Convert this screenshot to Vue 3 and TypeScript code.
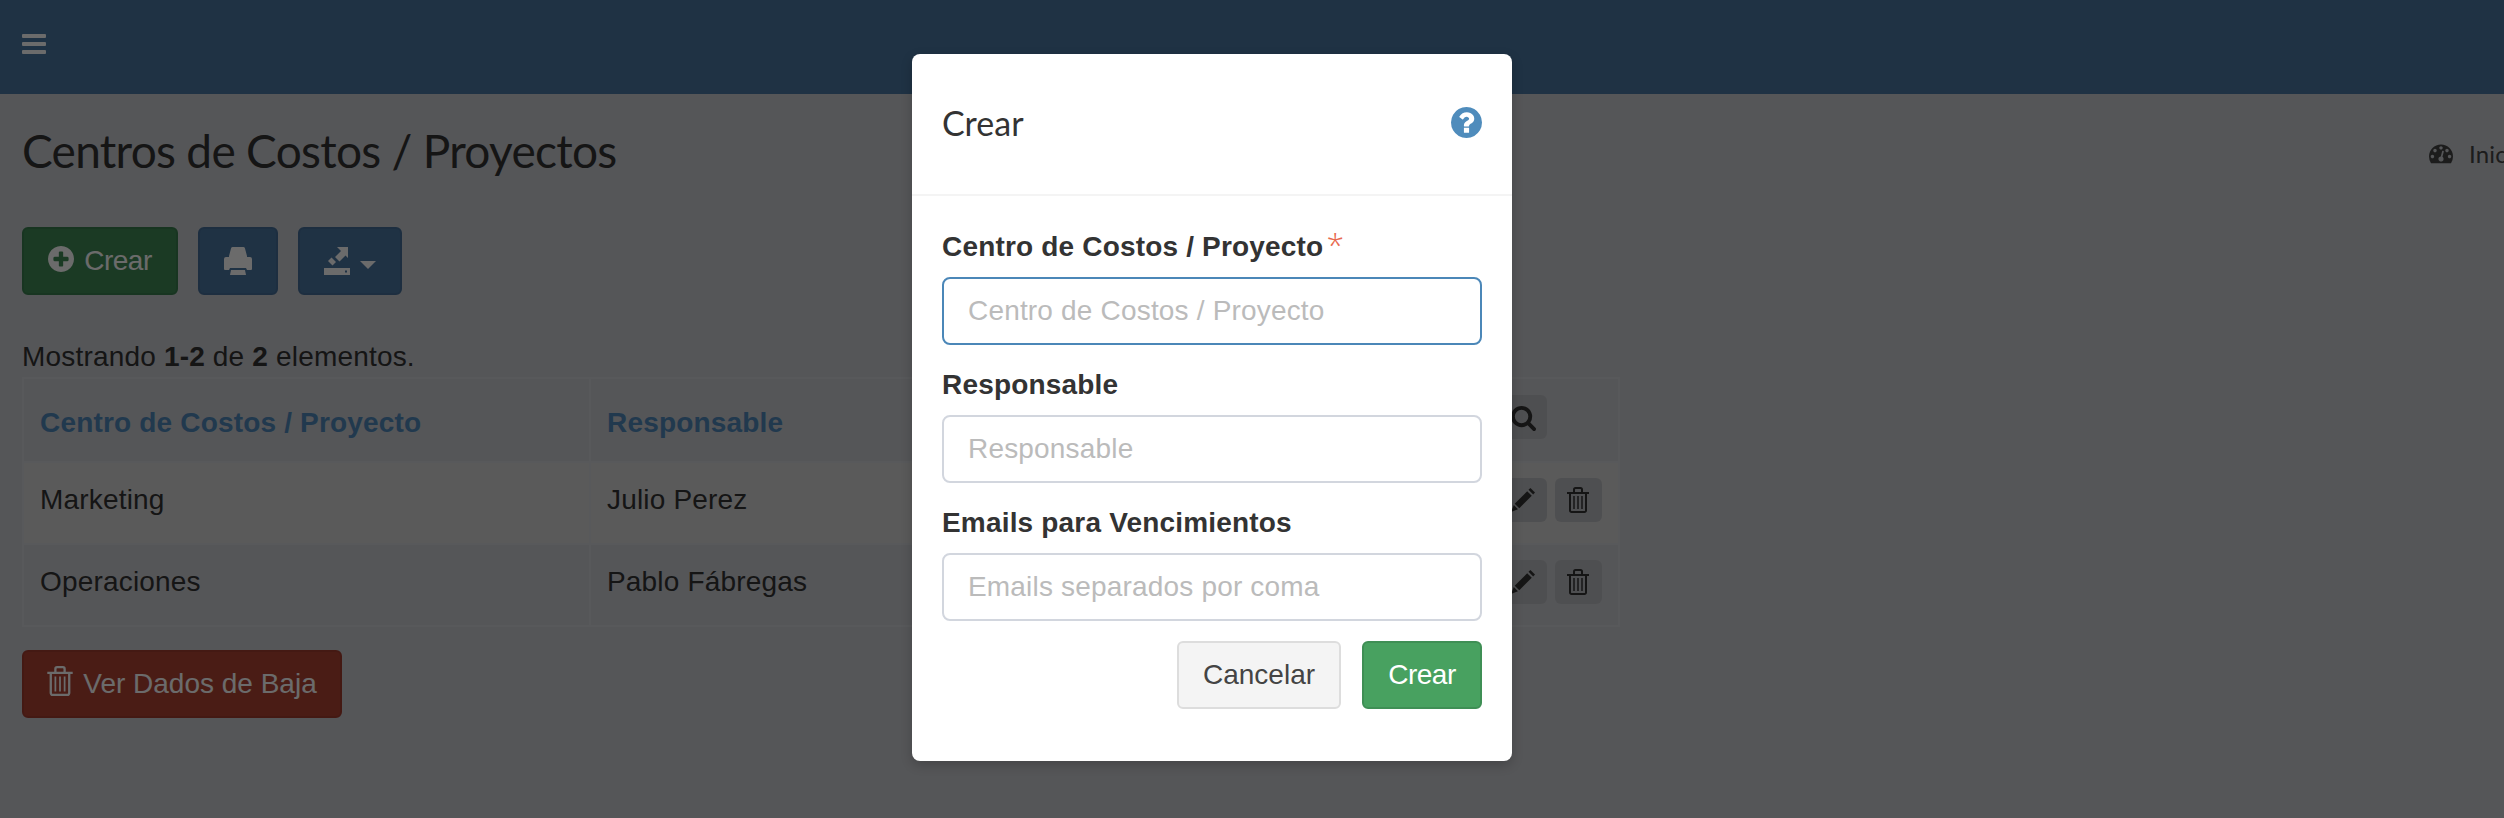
<script setup lang="ts">
interface Row {
  name: string
  owner: string
}

interface Field {
  label: string
  placeholder: string
  required?: boolean
  focused?: boolean
}

const rows: Row[] = [
  { name: 'Marketing', owner: 'Julio Perez' },
  { name: 'Operaciones', owner: 'Pablo Fábregas' },
]

const fields: Field[] = [
  { label: 'Centro de Costos / Proyecto', placeholder: 'Centro de Costos / Proyecto', required: true, focused: true },
  { label: 'Responsable', placeholder: 'Responsable' },
  { label: 'Emails para Vencimientos', placeholder: 'Emails separados por coma' },
]
</script>

<template>
  <div class="page">
    <header class="topbar">
      <svg class="bars" viewBox="0 0 24 20" fill="currentColor">
        <rect width="24" height="4" rx="1" />
        <rect y="8" width="24" height="4" rx="1" />
        <rect y="16" width="24" height="4" rx="1" />
      </svg>
    </header>

    <main class="content">
      <div class="title-row">
        <h1>Centros de Costos / Proyectos</h1>
        <div class="crumb">
          <svg class="gauge" viewBox="0 0 1792 1792" fill="currentColor">
            <path d="M384 1152q0-53-37.5-90.5t-90.5-37.5-90.5 37.5-37.5 90.5 37.5 90.5 90.5 37.5 90.5-37.5 37.5-90.5zm192-448q0-53-37.5-90.5t-90.5-37.5-90.5 37.5-37.5 90.5 37.5 90.5 90.5 37.5 90.5-37.5 37.5-90.5zm428 481l101-382q6-26-7.5-48.5t-38.5-29.5-48 6.5-30 39.5l-101 382q-60 5-107 43.5t-63 98.5q-20 77 20 146t117 89 146-20 89-117q16-60-6-117t-72-91zm660-33q0-53-37.5-90.5t-90.5-37.5-90.5 37.5-37.5 90.5 37.5 90.5 90.5 37.5 90.5-37.5 37.5-90.5zm-640-640q0-53-37.5-90.5t-90.5-37.5-90.5 37.5-37.5 90.5 37.5 90.5 90.5 37.5 90.5-37.5 37.5-90.5zm448 192q0-53-37.5-90.5t-90.5-37.5-90.5 37.5-37.5 90.5 37.5 90.5 90.5 37.5 90.5-37.5 37.5-90.5zm320 448q0 261-141 483-19 29-54 29h-1402q-35 0-54-29-141-221-141-483 0-182 71-348t191-286 286-191 348-71 348 71 286 191 191 286 71 348z" />
          </svg>
          <span>Inicio</span>
        </div>
      </div>

      <div class="toolbar">
        <button class="btn btn-green btn-create">
          <svg class="ico-plus" viewBox="128 128 1536 1536" fill="currentColor">
            <path d="M1344 960v-128q0-26-19-45t-45-19h-256v-256q0-26-19-45t-45-19h-128q-26 0-45 19t-19 45v256h-256q-26 0-45 19t-19 45v128q0 26 19 45t45 19h256v256q0 26 19 45t45 19h128q26 0 45-19t19-45v-256h256q26 0 45-19t19-45zm320-64q0 209-103 385.5t-279.5 279.5-385.5 103-385.5-103-279.5-279.5-103-385.5 103-385.5 279.5-279.5 385.5-103 385.5 103 279.5 279.5 103 385.5z" />
          </svg>
          <span class="tight">Crear</span>
        </button>
        <button class="btn btn-blue btn-print">
          <svg class="ico-print" viewBox="0 0 28 28" fill="currentColor">
            <path d="M7 1.500A1.500 1.500 0 0 1 8.500 0h11A1.500 1.500 0 0 1 21 1.500L23 9v1h3a2 2 0 0 1 2 2v10a1 1 0 0 1-1 1h-4l-1-2H6l-1 2H1a1 1 0 0 1-1-1V12a2 2 0 0 1 2-2h3V9z" />
            <path d="M7 23h14l1 5H6z" />
          </svg>
        </button>
        <button class="btn btn-blue btn-export">
          <svg class="ico-export" viewBox="0 0 26 28" fill="currentColor">
            <path d="M24 0H13l4 4-6 6 4.500 4.500 6-6 2.500 2.500z" />
            <path d="M7.500 10.500l4.500 4.500-3.500 3.500-4.500-4.500z" />
            <path fill-rule="evenodd" d="M0 21h26v7H0zM21 23.500v2h2v-2z" />
          </svg>
          <span class="caret"></span>
        </button>
      </div>

      <p class="summary">Mostrando <b>1-2</b> de <b>2</b> elementos.</p>

      <table class="grid">
        <colgroup>
          <col class="col-name" />
          <col class="col-owner" />
          <col class="col-actions" />
        </colgroup>
        <thead>
          <tr>
            <th>Centro de Costos / Proyecto</th>
            <th>Responsable</th>
            <th class="actions">
              <button class="mini">
                <svg class="ico-search" viewBox="0 0 1792 1792" fill="currentColor">
                  <path d="M1216 832q0-185-131.500-316.500t-316.500-131.500-316.500 131.500-131.500 316.500 131.500 316.500 316.500 131.500 316.500-131.500 131.500-316.500zm512 832q0 52-38 90t-90 38q-54 0-90-38l-343-342q-179 124-399 124-143 0-273.500-55.500t-225-150-150-225-55.500-273.500 55.500-273.500 150-225 225-150 273.500-55.500 273.500 55.500 225 150 150 225 55.500 273.500q0 220-124 399l343 343q37 37 37 90z" />
                </svg>
              </button>
            </th>
          </tr>
        </thead>
        <tbody>
          <tr v-for="row in rows" :key="row.name">
            <td>{{ row.name }}</td>
            <td>{{ row.owner }}</td>
            <td class="actions">
              <div class="action-btns">
                <button class="mini">
                  <svg class="ico-pencil" viewBox="0 0 26 26" fill="currentColor">
                    <path d="M21 0l5 5-2 2-5-5z" />
                    <path d="M17.500 3.500l5 5L9 22l-5-5z" />
                    <path d="M3 18.500L7.500 23 0 26z" />
                  </svg>
                </button>
                <button class="mini">
                  <svg class="ico-trash" viewBox="0 0 22 26" fill="none" stroke="currentColor" stroke-width="2">
                    <path d="M0 6h22M7 5.500V2.500a1.500 1.500 0 0 1 1.500-1.500h5A1.500 1.500 0 0 1 15 2.500v3" />
                    <path d="M3 6v17.500A1.500 1.500 0 0 0 4.500 25h13a1.500 1.500 0 0 0 1.500-1.500V6" />
                    <path stroke-width="1.500" d="M7 9v13M11 9v13M15 9v13" />
                  </svg>
                </button>
              </div>
            </td>
          </tr>
        </tbody>
      </table>

      <button class="btn btn-red">
        <svg class="ico-trash-big" viewBox="0 0 22 26" fill="none" stroke="currentColor" stroke-width="2">
          <path d="M0 6h22M7 5.500V2.500a1.500 1.500 0 0 1 1.500-1.500h5A1.500 1.500 0 0 1 15 2.500v3" />
          <path d="M3 6v17.500A1.500 1.500 0 0 0 4.500 25h13a1.500 1.500 0 0 0 1.500-1.500V6" />
          <path stroke-width="1.500" d="M7 9v13M11 9v13M15 9v13" />
        </svg>
        Ver Dados de Baja
      </button>
    </main>

    <div class="backdrop"></div>

    <section class="dialog">
      <div class="dialog-head">
        <h2>Crear</h2>
        <svg class="ico-help" viewBox="128 128 1536 1536" fill="currentColor">
          <path d="M1024 1376v-192q0-14-9-23t-23-9h-192q-14 0-23 9t-9 23v192q0 14 9 23t23 9h192q14 0 23-9t9-23zm256-672q0-88-55.500-163t-138.500-116-170-41q-243 0-371 213-15 24 8 42l132 100q7 6 19 6 16 0 25-12 53-68 86-92 34-24 86-24 48 0 85.500 26t37.500 59q0 38-20 61t-68 45q-63 28-115.500 86.500t-52.500 125.500v36q0 14 9 23t23 9h192q14 0 23-9t9-23q0-19 21.500-49.500t54.500-49.500q32-18 49-28.500t46-35 44.500-48 28-60.500 12.500-81zm384 192q0 209-103 385.500t-279.500 279.500-385.500 103-385.500-103-279.500-279.500-103-385.500 103-385.500 279.500-279.500 385.500-103 385.500 103 279.500 279.500 103 385.500z" />
        </svg>
      </div>
      <form class="dialog-body" @submit.prevent>
        <div v-for="field in fields" :key="field.label" class="field">
          <label>{{ field.label }}<span v-if="field.required" class="req">*</span></label>
          <input type="text" :class="{ focused: field.focused }" :placeholder="field.placeholder" />
        </div>
        <div class="dialog-actions">
          <button type="button" class="btn btn-cancel">Cancelar</button>
          <button type="submit" class="btn btn-save"><span class="tight">Crear</span></button>
        </div>
      </form>
    </section>
  </div>
</template>

<style scoped>
.page {
  position: relative;
  width: 2504px;
  height: 818px;
  overflow: hidden;
  background: #caccd2;
  font-family: "Liberation Sans", Arial, sans-serif;
  font-size: 28px;
  letter-spacing: 0.18px;
  color: #333;
}

.topbar {
  height: 94px;
  background: #4a77a2;
  display: flex;
  align-items: center;
  padding-left: 22px;
  color: #fff;
}

.bars {
  width: 24px;
  height: 20px;
  margin-bottom: 6px;
}

.content {
  padding: 0 0 0 22px;
}

.title-row {
  display: flex;
  align-items: center;
  height: 114px;
}

h1 {
  margin: 0;
  font-family: Lato, "Open Sans", sans-serif;
  font-weight: 400;
  font-size: 46px;
  letter-spacing: -0.7px;
  line-height: 64px;
  color: #333;
}

.crumb {
  margin-left: auto;
  margin-top: 4px;
  width: 75px;
  display: flex;
  align-items: center;
  gap: 16px;
  white-space: nowrap;
  font-family: Lato, sans-serif;
  font-size: 24px;
  color: #444;
}

.gauge {
  width: 24px;
  height: 24px;
  flex: none;
}

.toolbar {
  display: flex;
  gap: 20px;
  margin-top: 19px;
}

.btn {
  display: flex;
  align-items: center;
  justify-content: center;
  height: 68px;
  padding: 0;
  border: 2px solid transparent;
  border-radius: 6px;
  font-family: inherit;
  font-size: 28px;
  letter-spacing: 0;
  color: #fff;
  box-sizing: border-box;
}

.tight {
  letter-spacing: -0.5px;
}

.btn-green {
  background: #408a56;
  border-color: #3a7f4f;
}

.btn-blue {
  background: #4a77a2;
  border-color: #456f98;
}

.btn-create {
  width: 156px;
  gap: 10px;
}

.ico-plus {
  width: 26px;
  height: 26px;
  margin-bottom: 4px;
}

.btn-print {
  width: 80px;
}

.ico-print {
  width: 28px;
  height: 28px;
}

.btn-export {
  width: 104px;
  gap: 10px;
}

.ico-export {
  width: 26px;
  height: 28px;
}

.caret {
  width: 0;
  height: 0;
  margin-top: 8px;
  border-top: 8px solid #fff;
  border-left: 8px solid transparent;
  border-right: 8px solid transparent;
}

.summary {
  margin: 42px 0 0;
  line-height: 40px;
  color: #333;
}

.grid {
  width: 1598px;
  table-layout: fixed;
  border-collapse: collapse;
}

.col-name {
  width: 567px;
}

.col-owner {
  width: 890px;
}

th,
td {
  border: 2px solid #d1d3d8;
  padding: 17px 16px 0;
  text-align: left;
  vertical-align: top;
  line-height: 40px;
  box-sizing: border-box;
}

th {
  padding-top: 24px;
  height: 84px;
  color: #5088ba;
}

td {
  height: 82px;
  color: #333;
}

tbody tr:nth-child(odd) td {
  background: #d6d6d7;
}

th.actions {
  padding-top: 16px;
  padding-left: 18px;
}

td.actions {
  padding-top: 15px;
  padding-left: 18px;
}

.action-btns {
  display: flex;
  gap: 8px;
}

.mini {
  display: flex;
  align-items: center;
  justify-content: center;
  width: 48px;
  height: 44px;
  padding: 0;
  border: none;
  border-radius: 6px;
  background: #bbbdc1;
  color: #333;
}

.ico-search {
  width: 27px;
  height: 27px;
}

.ico-pencil {
  width: 24px;
  height: 24px;
}

.ico-trash {
  width: 22px;
  height: 26px;
}

.btn-red {
  margin-top: 23px;
  width: 320px;
  gap: 10px;
  background: #b04334;
  border-color: #a33d2f;
}

.ico-trash-big {
  width: 26px;
  height: 30px;
  margin-bottom: 6px;
}

.backdrop {
  position: absolute;
  inset: 0;
  background: rgba(0, 0, 0, 0.58);
}

.dialog {
  position: absolute;
  left: 912px;
  top: 54px;
  width: 600px;
  height: 707px;
  background: #fff;
  border-radius: 8px;
  box-shadow: 0 4px 12px rgba(0, 0, 0, 0.2);
  box-sizing: border-box;
}

.dialog-head {
  display: flex;
  align-items: center;
  justify-content: space-between;
  height: 142px;
  padding: 0 30px 4px;
  border-bottom: 2px solid #f4f4f4;
  box-sizing: border-box;
}

h2 {
  margin: 0;
  font-family: Lato, "Open Sans", sans-serif;
  font-weight: 400;
  font-size: 34px;
  letter-spacing: 0;
  color: #333;
}

.ico-help {
  width: 31px;
  height: 31px;
  color: #4f8cbc;
}

.dialog-body {
  padding: 31px 30px 0;
  display: flex;
  flex-direction: column;
  gap: 20px;
}

.field label {
  display: block;
  height: 40px;
  line-height: 40px;
  margin-bottom: 10px;
  font-weight: 700;
  color: #333;
}

.req {
  margin-left: 3px;
  font-family: "Open Sans", sans-serif;
  font-weight: 300;
  font-size: 32px;
  line-height: 32px;
  color: #e8694f;
}

.field input {
  display: block;
  width: 100%;
  height: 68px;
  padding: 0 24px;
  border: 2px solid #d2d6de;
  border-radius: 8px;
  outline: none;
  font-family: inherit;
  font-size: 28px;
  letter-spacing: 0.18px;
  color: #333;
  box-sizing: border-box;
}

.field input::placeholder {
  color: #bbb;
  opacity: 1;
}

.field input.focused {
  border-color: #4b87b8;
}

.dialog-actions {
  display: flex;
  justify-content: flex-end;
  gap: 21px;
}

.btn-cancel {
  width: 164px;
  background: #f4f4f4;
  border-color: #ddd;
  color: #444;
}

.btn-save {
  width: 120px;
  background: #48a160;
  border-color: #3f8f55;
}
</style>

<style>
html,
body {
  margin: 0;
  overflow: hidden;
}
</style>
